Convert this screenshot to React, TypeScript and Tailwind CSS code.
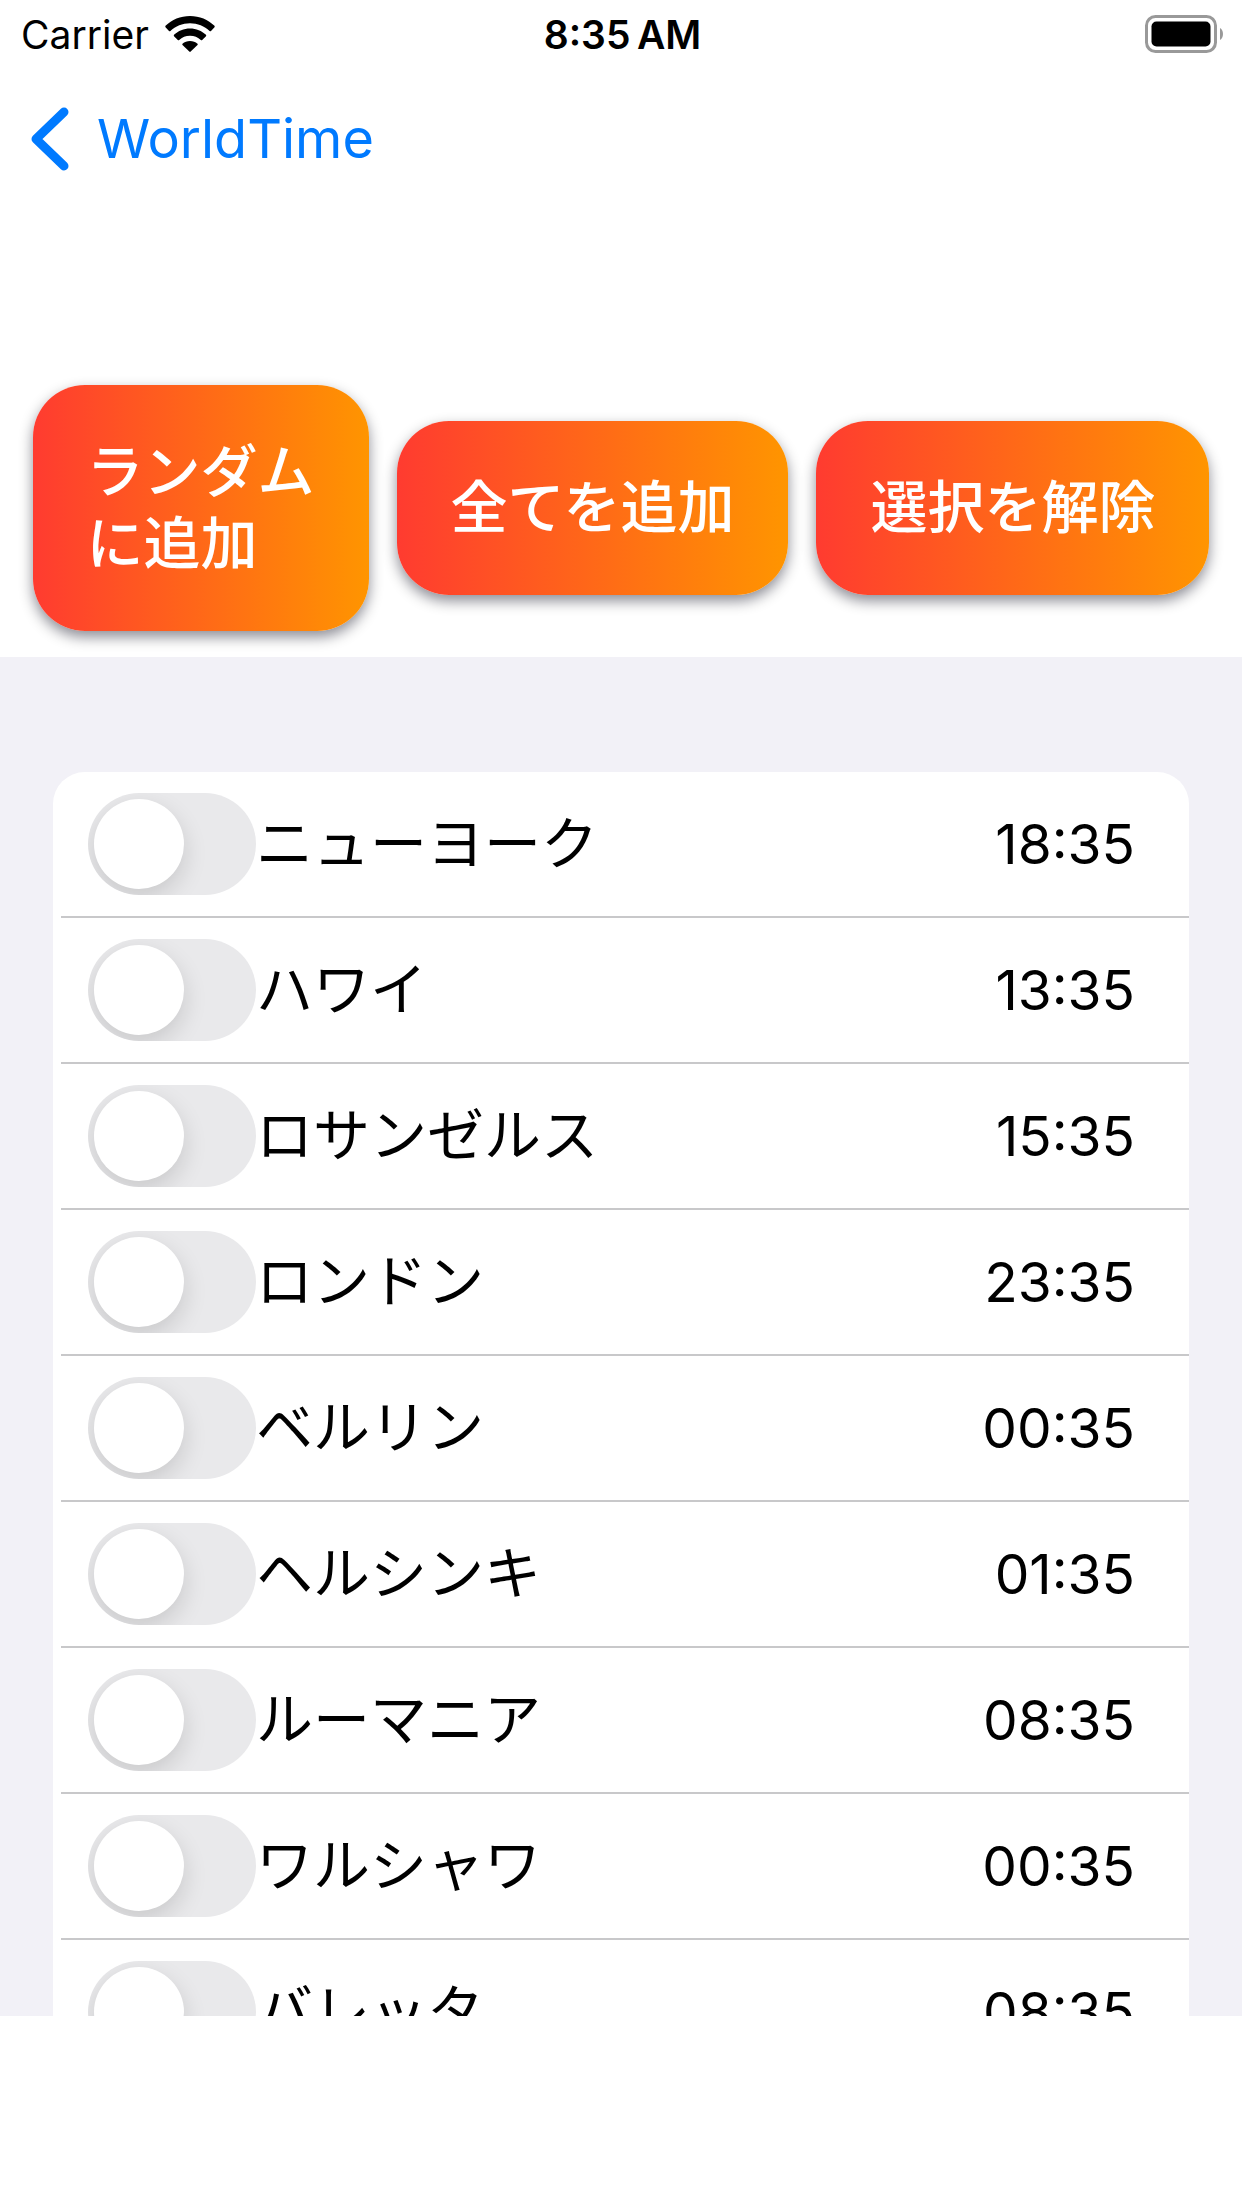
import React, { useState } from 'react';

interface City {
  id: string;
  name: string;
  time: string;
}

const cities: City[] = [
  { id: 'new-york', name: 'ニューヨーク', time: '18:35' },
  { id: 'hawaii', name: 'ハワイ', time: '13:35' },
  { id: 'los-angeles', name: 'ロサンゼルス', time: '15:35' },
  { id: 'london', name: 'ロンドン', time: '23:35' },
  { id: 'berlin', name: 'ベルリン', time: '00:35' },
  { id: 'helsinki', name: 'ヘルシンキ', time: '01:35' },
  { id: 'romania', name: 'ルーマニア', time: '08:35' },
  { id: 'warsaw', name: 'ワルシャワ', time: '00:35' },
  { id: 'valletta', name: 'バレッタ', time: '08:35' },
];

function StatusBar() {
  return (
    <div className="grid h-[68px] shrink-0 grid-cols-3 items-center pl-[21px] pr-[18px] text-[39px] leading-none">
      <div className="flex items-center gap-4">
        <span>Carrier</span>
        <svg className="h-9 w-[50px]" viewBox="0 0 50 36" aria-hidden="true">
          <path d="M25 0C34.500 0 43.200 3.700 49.500 9.800Q50 10.500 49.500 11.200L46 15Q45.300 15.600 44.600 15C39.500 10.200 32.600 7.200 25 7.200S10.500 10.200 5.400 15Q4.700 15.600 4 15L.5 11.200Q0 10.500.5 9.800C6.800 3.700 15.500 0 25 0Z" />
          <path d="M25 12.500C31.200 12.500 36.800 14.900 41 18.800Q41.500 19.500 41 20.200L37.200 23.900Q36.500 24.500 35.800 23.900C33 21.400 29.200 19.800 25 19.800S17 21.400 14.200 23.900Q13.500 24.500 12.800 23.900L9 20.200Q8.500 19.500 9 18.800C13.200 14.900 18.800 12.500 25 12.500Z" />
          <path d="M25 25C27.900 25 30.500 26 32.500 27.700Q33 28.300 32.500 28.900L25.700 35.600Q25 36.200 24.300 35.600L17.500 28.900Q17 28.300 17.500 27.700C19.500 26 22.100 25 25 25Z" />
        </svg>
      </div>
      <span className="text-center font-semibold">8:35{'\u2009'}AM</span>
      <svg className="h-[38px] w-[79px] justify-self-end" viewBox="0 0 79 38" aria-hidden="true">
        <rect x="1.500" y="1.500" width="69" height="35" rx="9" fill="none" stroke="#999" strokeWidth="3" />
        <rect x="6.500" y="6.500" width="59" height="25" rx="5" />
        <path d="M75 13C79 15 79 23 75 25Z" fill="#999" />
      </svg>
    </div>
  );
}

function ActionButton({ children, onClick }: { children: React.ReactNode; onClick: () => void }) {
  return (
    <button
      type="button"
      onClick={onClick}
      className="cursor-pointer rounded-[52px] bg-linear-to-r/srgb from-[#ff3b30] to-[#ff9500] px-[54px] py-[51px] text-left text-[57px] leading-[72px] font-medium text-white shadow-[0_6px_14px_rgba(0,0,20,0.45)]"
    >
      {children}
    </button>
  );
}

function CityRow({ city, checked, onToggle }: { city: City; checked: boolean; onToggle: () => void }) {
  return (
    <li className="ml-2 flex h-[146px] items-center border-b-2 border-[#c8c8ca] pl-[27px] pr-[54px] last:border-transparent">
      <input
        id={city.id}
        type="checkbox"
        role="switch"
        checked={checked}
        onChange={onToggle}
        className="flex h-[102px] w-[168px] shrink-0 cursor-pointer appearance-none items-center overflow-hidden rounded-full bg-[#e9e9eb] px-1.5 before:size-[90px] before:rounded-full before:bg-white before:shadow-[0_9px_24px_rgba(0,0,0,0.14)] checked:justify-end checked:bg-[#34c759]"
      />
      <label htmlFor={city.id} className="flex-1 cursor-pointer text-[57px] leading-[72px]">
        {city.name}
      </label>
      <span className="text-[55px] leading-[72px]">{city.time}</span>
    </li>
  );
}

export default function App() {
  const [selected, setSelected] = useState<string[]>([]);

  const toggle = (id: string) => {
    setSelected((prev) => (prev.includes(id) ? prev.filter((item) => item !== id) : [...prev, id]));
  };

  const addRandom = () => {
    const rest = cities.filter((city) => !selected.includes(city.id));
    if (rest.length > 0) {
      const pick = rest[Math.floor(Math.random() * rest.length)];
      setSelected([...selected, pick.id]);
    }
  };

  return (
    <div className="flex h-screen flex-col bg-white pb-48 font-['Inter','Noto_Sans_CJK_JP',sans-serif] text-black">
      <StatusBar />

      {/* Navigation */}
      <nav className="flex h-[142px] shrink-0 items-center px-[31px]">
        <a href="#world-time" className="flex items-center gap-7 text-[54px] leading-none text-[#007aff]">
          <svg className="h-16 w-[38px]" viewBox="0 0 38 64" fill="none" aria-hidden="true">
            <path d="M33 5L5 32L33 59" stroke="currentColor" strokeWidth="9" strokeLinecap="round" strokeLinejoin="round" />
          </svg>
          WorldTime
        </a>
      </nav>

      {/* Bulk actions */}
      <div className="flex shrink-0 items-center justify-center gap-7 pt-[175px] pb-[26px]">
        <ActionButton onClick={addRandom}>
          ランダム
          <br />
          に追加
        </ActionButton>
        <ActionButton onClick={() => setSelected(cities.map((city) => city.id))}>全てを追加</ActionButton>
        <ActionButton onClick={() => setSelected([])}>選択を解除</ActionButton>
      </div>

      {/* City list */}
      <main className="min-h-0 flex-1 overflow-y-auto bg-[#f2f1f7] px-[53px] pt-[115px] [scrollbar-width:none]">
        <ul className="rounded-[32px] bg-white">
          {cities.map((city) => (
            <CityRow
              key={city.id}
              city={city}
              checked={selected.includes(city.id)}
              onToggle={() => toggle(city.id)}
            />
          ))}
        </ul>
      </main>
    </div>
  );
}
